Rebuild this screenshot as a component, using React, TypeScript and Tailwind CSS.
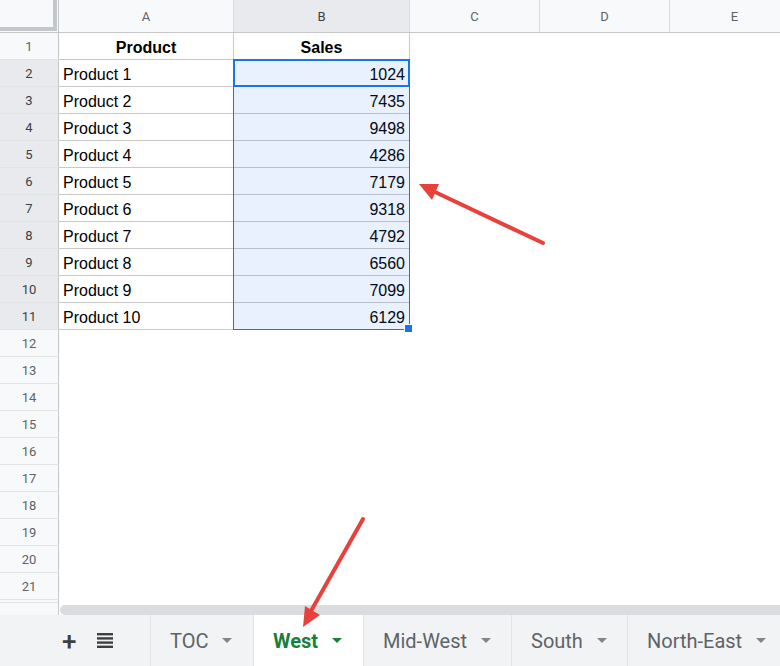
import React from 'react';

const COLS = [
  { label: 'A', w: 175 },
  { label: 'B', w: 176 },
  { label: 'C', w: 130 },
  { label: 'D', w: 130 },
  { label: 'E', w: 130 },
];

const DATA: [string, number][] = [
  ['Product 1', 1024],
  ['Product 2', 7435],
  ['Product 3', 9498],
  ['Product 4', 4286],
  ['Product 5', 7179],
  ['Product 6', 9318],
  ['Product 7', 4792],
  ['Product 8', 6560],
  ['Product 9', 7099],
  ['Product 10', 6129],
];

const TABS = [
  { name: 'TOC', w: 103 },
  { name: 'West', w: 110, active: true },
  { name: 'Mid-West', w: 148 },
  { name: 'South', w: 116 },
  { name: 'North-East', w: 160 },
];

function Caret({ color }: { color: string }) {
  return (
    <svg width="10" height="6" viewBox="0 0 10 6">
      <path d="M0 0 H10 L5 5 Z" fill={color} />
    </svg>
  );
}

function Row({ n }: { n: number }) {
  const selected = n >= 2 && n <= 11;
  const inTable = n <= 11;
  const rec = n >= 2 && n <= 11 ? DATA[n - 2] : null;
  return (
    <div className="flex h-[27px] shrink-0">
      <div
        className={`w-[59px] shrink-0 border-r border-b border-r-[#c4c7c5] border-b-[#e2e3e3] text-center text-[13px] leading-[28px] font-['Roboto',sans-serif] ${
          selected ? 'bg-[#e8eaed] text-[#3c4043]' : 'bg-[#f8f9fa] text-[#5f6368]'
        }`}
      >
        {n}
      </div>
      {COLS.map((c, i) => {
        const bordered = inTable && i < 2;
        let content: React.ReactNode = null;
        let align = 'text-left';
        let bold = '';
        if (n === 1 && i === 0) { content = 'Product'; align = 'text-center'; bold = 'font-bold'; }
        if (n === 1 && i === 1) { content = 'Sales'; align = 'text-center'; bold = 'font-bold'; }
        if (rec && i === 0) content = rec[0];
        if (rec && i === 1) { content = rec[1]; align = 'text-right'; }
        return (
          <div
            key={c.label}
            style={{ width: c.w }}
            className={`shrink-0 px-[4px] text-[16px] leading-[29px] text-black font-['Liberation_Sans',Arial,sans-serif] ${align} ${bold} ${
              bordered ? 'border-r border-b border-[#c9c9c9]' : ''
            }`}
          >
            {content}
          </div>
        );
      })}
    </div>
  );
}

export default function App() {
  return (
    <div className="relative w-[780px] h-[666px] overflow-hidden bg-white flex flex-col select-none">
      {/* column headers */}
      <div className="flex h-[33px] shrink-0 border-b border-[#c4c7c5] bg-[#f8f9fa]">
        <div className="w-[59px] shrink-0 border-r border-[#c4c7c5] flex">
          <div className="flex-1 mr-[1px] mb-[1px] border-r-4 border-b-4 border-[#c3c6ca]" />
        </div>
        {COLS.map((c) => (
          <div
            key={c.label}
            style={{ width: c.w }}
            className={`shrink-0 border-r border-[#dadce0] text-center text-[13px] leading-[33px] font-['Roboto',sans-serif] ${
              c.label === 'B' ? 'bg-[#e8eaed] text-[#3c4043]' : 'text-[#5f6368]'
            }`}
          >
            {c.label}
          </div>
        ))}
      </div>

      {/* rows */}
      {Array.from({ length: 21 }, (_, i) => (
        <Row key={i} n={i + 1} />
      ))}

      {/* partial row + horizontal scrollbar */}
      <div className="flex h-[15px] shrink-0">
        <div className="w-[59px] shrink-0 bg-[#f8f9fa] border-r border-[#c4c7c5] flex flex-col">
          <div className="h-[3px] border-b border-[#e2e3e3]" />
        </div>
        <div className="flex-1 pt-[5px] pl-[1px]">
          <div className="h-[10px] rounded-l-full bg-[#dadce0]" />
        </div>
      </div>

      {/* sheet tabs */}
      <div className="flex flex-1 bg-[#f1f3f4] font-['Roboto',sans-serif]">
        <div className="w-[150px] shrink-0 flex items-center">
          <span className="ml-[62px] text-[26px] leading-none font-medium text-[#3c4043]">+</span>
          <svg className="ml-[21px]" width="16" height="15" viewBox="0 0 16 15">
            <rect x="0" y="0" width="16" height="2.4" fill="#3c4043" />
            <rect x="0" y="4.2" width="16" height="2.4" fill="#3c4043" />
            <rect x="0" y="8.4" width="16" height="2.4" fill="#3c4043" />
            <rect x="0" y="12.6" width="16" height="2.4" fill="#3c4043" />
          </svg>
        </div>
        {TABS.map((t) => (
          <div
            key={t.name}
            style={{ width: t.w }}
            className={`shrink-0 flex items-center gap-[14px] pl-[19px] border-l border-[#e3e4e6] ${
              t.active ? 'bg-white text-[#188038] font-bold' : 'text-[#5f6368]'
            }`}
          >
            <span className="text-[20px] leading-none">{t.name}</span>
            <Caret color={t.active ? '#188038' : '#80868b'} />
          </div>
        ))}
      </div>

      {/* selection B2:B11 */}
      <div className="absolute left-[233px] top-[59px] w-[177px] h-[271px] border border-[#1a73e8] bg-[#1a73e8]/10 pointer-events-none" />
      <div className="absolute left-[233px] top-[59px] w-[177px] h-[28px] border-2 border-[#1a73e8] pointer-events-none" />
      <div className="absolute left-[404px] top-[324px] w-[9px] h-[9px] bg-[#1a73e8] border border-white" />

      {/* annotation arrows */}
      <svg className="absolute inset-0 pointer-events-none" width="780" height="666" viewBox="0 0 780 666">
        <line x1="543" y1="243" x2="435" y2="192" stroke="#e8413b" strokeWidth="4" strokeLinecap="round" />
        <polygon points="419,184 439,184 432,200" fill="#e8413b" />
        <line x1="363" y1="519" x2="311" y2="611" stroke="#e8413b" strokeWidth="4" strokeLinecap="round" />
        <polygon points="303,627 305,606 320,615" fill="#e8413b" />
      </svg>
    </div>
  );
}
